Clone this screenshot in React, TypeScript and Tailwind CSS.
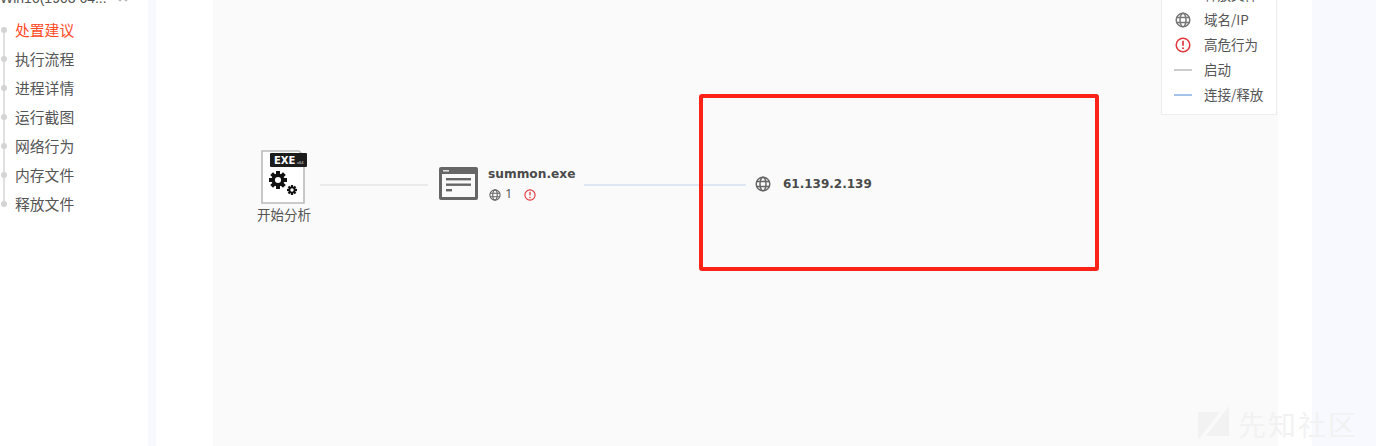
import React from 'react';

const font = { fontFamily: '"Microsoft YaHei", "Noto Sans CJK SC", sans-serif' };

const navItems = ['处置建议', '执行流程', '进程详情', '运行截图', '网络行为', '内存文件', '释放文件'];

const Globe = ({ size = 16, color = '#666' }: { size?: number; color?: string }) => (
  <svg width={size} height={size} viewBox="0 0 16 16" fill="none" stroke={color} strokeWidth="1.5">
    <circle cx="8" cy="8" r="6.8" />
    <ellipse cx="8" cy="8" rx="3" ry="6.8" />
    <path d="M1.5 5.6h13M1.5 10.4h13" />
  </svg>
);

const Alert = ({ size = 16 }: { size?: number }) => (
  <svg width={size} height={size} viewBox="0 0 16 16" fill="none">
    <circle cx="8" cy="8" r="6.8" stroke="#e0383e" strokeWidth="1.5" />
    <path d="M8 3.8v5" stroke="#e0383e" strokeWidth="1.7" />
    <circle cx="8" cy="11.3" r="1" fill="#e0383e" />
  </svg>
);

const Gear = ({ cx, cy, r }: { cx: number; cy: number; r: number }) => (
  <g>
    <circle cx={cx} cy={cy} r={r * 0.72} fill="#111" />
    {[0, 45, 90, 135].map((a) => (
      <rect
        key={a}
        x={cx - r * 0.22}
        y={cy - r}
        width={r * 0.44}
        height={r * 2}
        fill="#111"
        transform={`rotate(${a} ${cx} ${cy})`}
      />
    ))}
    <circle cx={cx} cy={cy} r={r * 0.34} fill="#fff" />
  </g>
);

const ExeFile = () => (
  <svg width="48" height="56" viewBox="0 0 48 56">
    <path d="M2 2h37l5 5v47H2z" fill="#fff" stroke="#bbb" strokeWidth="1.6" />
    <rect x="10" y="4" width="37" height="14" rx="1" fill="#1c1c1c" />
    <text x="14" y="15" fontSize="10" fontWeight="700" fill="#fff" fontFamily="DejaVu Sans, sans-serif">EXE</text>
    <text x="37" y="15" fontSize="4" fill="#ddd" fontFamily="Liberation Sans, sans-serif">x64</text>
    <Gear cx={18} cy={31} r={9} />
    <Gear cx={32} cy={41} r={5} />
  </svg>
);

const WindowIcon = () => (
  <svg width="39" height="33" viewBox="0 0 39 33">
    <rect x="0" y="0" width="39" height="33" rx="2" fill="#666" />
    <rect x="3" y="7" width="33" height="23" fill="#fafafa" />
    <rect x="4" y="3" width="6" height="1.6" fill="#ddd" />
    <rect x="7" y="11" width="25" height="2.4" fill="#666" />
    <rect x="7" y="16.5" width="25" height="2.4" fill="#666" />
    <rect x="7" y="22" width="6" height="2.4" fill="#666" />
  </svg>
);

export default function App() {
  return (
    <div className="relative flex h-[446px] w-[1376px] overflow-hidden bg-[#f8f9ff] text-[#4a4a4a]" style={font}>
      {/* Left nav */}
      <aside className="w-[148px] shrink-0 bg-white">
        <div className="-mt-[10px] flex h-[17px] items-center whitespace-nowrap font-['Liberation_Sans'] text-[14px] leading-[17px] text-[#555]">
          <span className="w-[116px]">Win10(1903 64...</span>
          <svg width="14" height="8" viewBox="0 0 14 8" fill="none" stroke="#bbb" strokeWidth="1.2" className="mt-[4px]">
            <path d="M1 1l3 3 3-3M7 1l3 3 3-3" />
          </svg>
        </div>
        <ul className="relative mt-[8px]">
          <div className="absolute left-[3px] top-[14px] h-[174px] w-[2px] bg-[#e0e0e0]" />
          {navItems.map((item, i) => (
            <li key={item} className="relative flex h-[29px] items-center pl-[1px]">
              <span className="h-[6px] w-[6px] shrink-0 rounded-full bg-[#d4d4d4]" />
              <span className={`ml-[8px] text-[14.8px] leading-[20px] ${i === 0 ? 'text-[#ff4a26]' : 'text-[#555]'}`}>{item}</span>
            </li>
          ))}
        </ul>
      </aside>

      {/* Main */}
      <main className="ml-2 flex w-[1156px] shrink-0 bg-white pl-[57px] pr-[34px]">
        <div className="relative flex-1 bg-[#fafafa]">
          {/* Start node */}
          <div className="absolute left-[35px] top-[149px] flex w-[72px] flex-col items-center">
            <ExeFile />
            <span className="whitespace-nowrap text-[13.5px] leading-[18px] text-[#555]">开始分析</span>
          </div>
          <div className="absolute left-[107px] top-[184px] h-[2px] w-[108px] bg-[#e8eaec]" />

          {/* Process node */}
          <div className="absolute left-[226px] top-[167px] flex gap-[10px]">
            <WindowIcon />
            <div className="-mt-[1px]">
              <div className="font-['DejaVu_Sans'] text-[12.2px] font-bold leading-[16px] text-[#4a4a4a]">summon.exe</div>
              <div className="mt-[6px] flex items-center pl-px text-[13px] leading-[16px]">
                <Globe size={12} />
                <span className="ml-[4px] -mt-[3px] font-['Open_Sans'] text-[#555]">1</span>
                <span className="ml-[12px]"><Alert size={12} /></span>
              </div>
            </div>
          </div>
          <div className="absolute left-[371px] top-[184px] h-[2px] w-[162px] bg-[#dde6f2]" />

          {/* IP node */}
          <div className="absolute left-[542px] top-[176px] flex items-center gap-[12px]">
            <Globe size={16} />
            <span className="font-['DejaVu_Sans'] text-[12px] font-bold leading-[15px] text-[#4a4a4a]">61.139.2.139</span>
          </div>

          {/* Legend */}
          <div className="absolute right-px top-[-19px] h-[134px] w-[116px] border border-[#eeeeee] bg-white text-[13.5px] text-[#555]">
            <div className="flex flex-col pl-[12px]">
              <div className="flex h-[25px] items-center gap-[13px]">
                <span className="flex w-[17px] justify-center"><span className="h-[2px] w-[15px] bg-[#888]" /></span>
                <span>释放文件</span>
              </div>
              <div className="flex h-[25px] items-center gap-[11px]">
                <span className="flex w-[17px] justify-center"><Globe size={16} color="#777" /></span>
                <span className="pl-[2px]">域名/IP</span>
              </div>
              <div className="flex h-[25px] items-center gap-[11px]">
                <span className="flex w-[17px] justify-center"><Alert size={16} /></span>
                <span className="pl-[2px]">高危行为</span>
              </div>
              <div className="flex h-[25px] items-center gap-[13px]">
                <span className="h-[2px] w-[18px] bg-[#ccc]" />
                <span className="-ml-[1px]">启动</span>
              </div>
              <div className="flex h-[25px] items-center gap-[13px]">
                <span className="h-[2px] w-[18px] bg-[#a3c4e8]" />
                <span className="-ml-[1px]">连接/释放</span>
              </div>
            </div>
          </div>
        </div>
      </main>

      {/* Red annotation box */}
      <div className="absolute left-[699px] top-[94px] h-[177px] w-[400px] rounded-[3px] border-[4px] border-[#fb2318]" />

      {/* Watermark */}
      <div className="absolute left-[1198px] top-[406px] flex items-center gap-[8px] text-[#f2f2f3]">
        <svg width="32" height="36" viewBox="0 0 32 36">
          <path d="M0 6h22L0 34zM31 0v30H8z" fill="#f2f2f3" />
        </svg>
        <span className="text-[28px] leading-[36px] tracking-[2px]">先知社区</span>
      </div>
    </div>
  );
}
